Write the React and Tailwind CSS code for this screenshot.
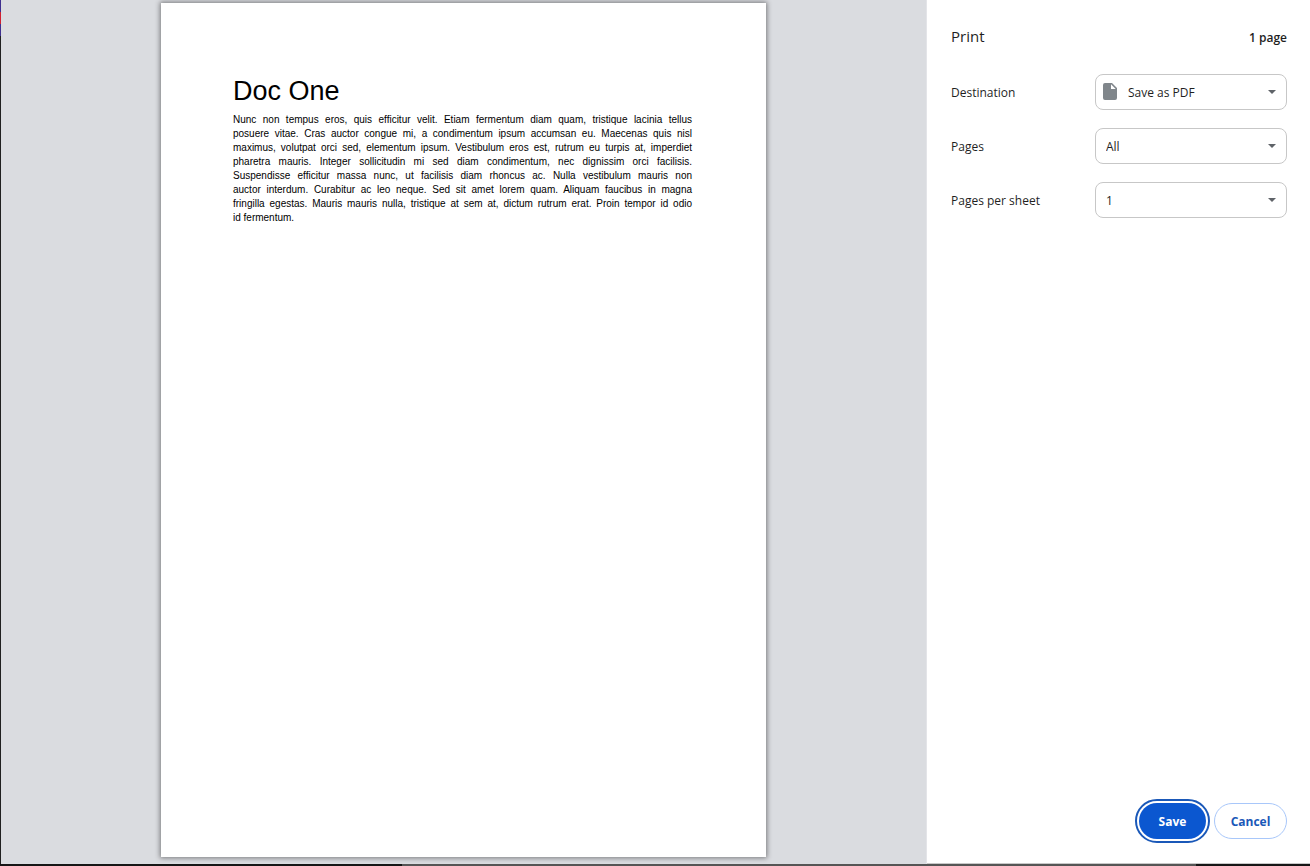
import React, { useState } from 'react';

const SelectRow = ({ id, label, options, icon = null }) => {
  const [value, setValue] = useState(options[0]);

  return (
    <div className="flex items-center justify-between">
      <label htmlFor={id} className="pt-[2px] text-[12px] leading-5">{label}</label>
      <div className="relative w-48">
        <select
          id={id}
          value={value}
          onChange={(e) => setValue(e.target.value)}
          className={`block h-9 w-full appearance-none rounded-lg border border-[#c7c7c7] bg-white pt-px pr-8 text-[12px] text-[#1f1f1f] ${icon ? 'pl-8' : 'pl-[10px]'}`}
        >
          {options.map((option) => (
            <option key={option}>{option}</option>
          ))}
        </select>
        {icon}
        {/* Drop-down arrow */}
        <svg
          viewBox="0 0 8 4"
          className="pointer-events-none absolute top-4 right-[11px] h-1 w-2"
          aria-hidden="true"
        >
          <path d="M0 0h8L4 4z" fill="#5f6368" />
        </svg>
      </div>
    </div>
  );
};

const FileIcon = () => (
  <svg
    viewBox="0 0 14 17"
    className="pointer-events-none absolute top-[9px] left-2 h-[17px] w-[14px]"
    aria-hidden="true"
  >
    <path
      fillRule="evenodd"
      d="M2 0h7l5 5v10a2 2 0 0 1-2 2H2a2 2 0 0 1-2-2V2a2 2 0 0 1 2-2zM8 1.3V6h4.7z"
      fill="#80868b"
    />
  </svg>
);

// The printed document keeps its own line breaks
const LINES = [
  'Nunc non tempus eros, quis efficitur velit. Etiam fermentum diam quam, tristique lacinia tellus',
  'posuere vitae. Cras auctor congue mi, a condimentum ipsum accumsan eu. Maecenas quis nisl',
  'maximus, volutpat orci sed, elementum ipsum. Vestibulum eros est, rutrum eu turpis at, imperdiet',
  'pharetra mauris. Integer sollicitudin mi sed diam condimentum, nec dignissim orci facilisis.',
  'Suspendisse efficitur massa nunc, ut facilisis diam rhoncus ac. Nulla vestibulum mauris non',
  'auctor interdum. Curabitur ac leo neque. Sed sit amet lorem quam. Aliquam faucibus in magna',
  'fringilla egestas. Mauris mauris nulla, tristique at sem at, dictum rutrum erat. Proin tempor id odio',
  'id fermentum.',
];

const Preview = () => (
  <main className="flex flex-1 justify-center border-r border-[#e3e4e8] bg-[#dadce0] pt-[3px] pb-[7px]">
    <article className="aspect-[605/854] w-full max-w-[605px] self-start bg-white pt-[72px] pr-[74px] pl-[72px] font-['Liberation_Sans',Arial,sans-serif] text-black shadow-[0_0_5px_1px_rgba(0,0,0,0.45)]">
      <h1 className="text-[27px] leading-8">Doc One</h1>
      <p className="mt-[6px] text-justify text-[10px] leading-[14px]">
        {LINES.map((line) => (
          <span key={line} className="block [text-align-last:justify] last:[text-align-last:left]">
            {line}
          </span>
        ))}
      </p>
    </article>
  </main>
);

const Sidebar = () => (
  <aside className="flex w-[383px] flex-col border-b border-[#c8c8c8] bg-white pr-[23px] pl-6 text-[#1f1f1f]">
    <header className="flex items-baseline justify-between pt-6">
      <h2 className="text-[15px] leading-6">Print</h2>
      <span className="text-[12px] leading-6 font-semibold">1 page</span>
    </header>

    <div className="mt-6 flex flex-1 flex-col gap-[18px]">
      <SelectRow
        id="destination"
        label="Destination"
        options={['Save as PDF', 'See more…']}
        icon={<FileIcon />}
      />
      <SelectRow id="pages" label="Pages" options={['All', 'Custom']} />
      <SelectRow id="per-sheet" label="Pages per sheet" options={['1', '2', '4', '6', '9', '16']} />
    </div>

    <footer className="flex justify-end gap-2 pb-6 text-[12px] font-bold">
      <button
        type="button"
        className="h-9 w-[67px] rounded-full bg-[#0b57d0] pt-px text-white outline-2 outline-offset-2 outline-[#1a58b8]"
      >
        Save
      </button>
      <button
        type="button"
        className="h-9 w-[73px] rounded-full border border-[#a8c7fa] pt-px text-[#1a58b8]"
      >
        Cancel
      </button>
    </footer>
  </aside>
);

// Strips of the window behind the dialog, along the left and bottom edges
const LeftEdge = () => (
  <div className="flex w-px flex-col bg-[#202020]">
    <div className="h-3 bg-[#3f2f8f]" />
    <div className="h-3 bg-[#d02030]" />
    <div className="h-3 bg-[#3f2f8f]" />
  </div>
);

const BottomEdge = () => (
  <div className="flex h-[2px] bg-[#161616]">
    <div className="w-[402px]" />
    <div className="w-[794px] bg-[#555555]" />
  </div>
);

export default function App() {
  return (
    <div className="flex min-h-screen flex-col font-['Open_Sans','Noto_Sans',sans-serif]">
      <div className="flex flex-1">
        <LeftEdge />
        <Preview />
        <Sidebar />
      </div>
      <BottomEdge />
    </div>
  );
}
